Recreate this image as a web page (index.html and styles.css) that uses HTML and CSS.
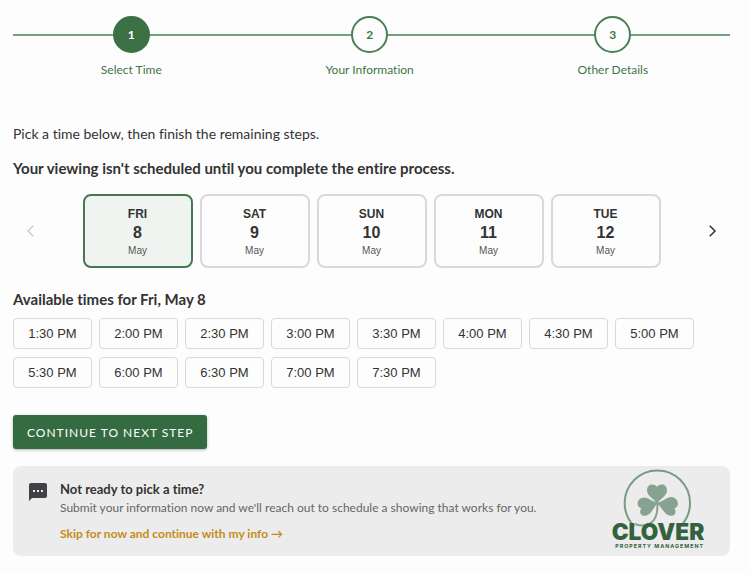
FILE: index.html
```html
<!DOCTYPE html>
<html lang="en">
<head>
  <meta charset="UTF-8" />
  <meta name="viewport" content="width=device-width, initial-scale=1" />
  <title>Schedule a Viewing</title>
  <link rel="stylesheet" href="styles.css">
</head>
<body>
  <main class="scheduler">
    <!-- Steps -->
    <ol class="steps">
      <li class="step active"><span class="step-number">1</span>Select Time</li>
      <li class="step"><span class="step-number">2</span>Your Information</li>
      <li class="step"><span class="step-number">3</span>Other Details</li>
    </ol>

    <p class="intro">Pick a time below, then finish the remaining steps.</p>
    <p class="notice">Your viewing isn't scheduled until you complete the entire process.</p>

    <!-- Day picker -->
    <div class="day-picker">
      <button class="arrow" type="button" aria-label="Previous days" disabled>
        <svg viewBox="0 0 24 24" width="18" height="18"><path d="M15 5l-7 7 7 7" /></svg>
      </button>
      <div class="days">
        <button class="day selected" type="button"><span class="weekday">FRI</span><span class="date">8</span><span class="month">May</span></button>
        <button class="day" type="button"><span class="weekday">SAT</span><span class="date">9</span><span class="month">May</span></button>
        <button class="day" type="button"><span class="weekday">SUN</span><span class="date">10</span><span class="month">May</span></button>
        <button class="day" type="button"><span class="weekday">MON</span><span class="date">11</span><span class="month">May</span></button>
        <button class="day" type="button"><span class="weekday">TUE</span><span class="date">12</span><span class="month">May</span></button>
      </div>
      <button class="arrow" type="button" aria-label="Next days">
        <svg viewBox="0 0 24 24" width="18" height="18"><path d="M9 5l7 7-7 7" /></svg>
      </button>
    </div>

    <!-- Time slots -->
    <h2 class="times-title">Available times for Fri, May 8</h2>
    <div class="times">
      <button class="time" type="button">1:30 PM</button>
      <button class="time" type="button">2:00 PM</button>
      <button class="time" type="button">2:30 PM</button>
      <button class="time" type="button">3:00 PM</button>
      <button class="time" type="button">3:30 PM</button>
      <button class="time" type="button">4:00 PM</button>
      <button class="time" type="button">4:30 PM</button>
      <button class="time" type="button">5:00 PM</button>
      <button class="time" type="button">5:30 PM</button>
      <button class="time" type="button">6:00 PM</button>
      <button class="time" type="button">6:30 PM</button>
      <button class="time" type="button">7:00 PM</button>
      <button class="time" type="button">7:30 PM</button>
    </div>

    <button class="continue-btn" type="button">CONTINUE TO NEXT STEP</button>

    <!-- Skip option -->
    <section class="skip-box">
      <svg class="chat-icon" viewBox="0 0 20 20" width="20" height="20">
        <path d="M3 1h14a2 2 0 0 1 2 2v11a2 2 0 0 1-2 2H4l-3 3V3a2 2 0 0 1 2-2z" fill="#404144" />
        <path d="M5 8h2v2H5zM9 8h2v2H9zM13 8h2v2h-2z" fill="#ececec" />
      </svg>
      <div class="skip-text">
        <h3 class="skip-title">Not ready to pick a time?</h3>
        <p class="skip-info">Submit your information now and we'll reach out to schedule a showing that works for you.</p>
        <a class="skip-link" href="#">Skip for now and continue with my info →</a>
      </div>
      <svg class="logo" viewBox="30 24 288 246" width="96" height="82" role="img" aria-label="Clover Property Management">
        <path d="M103 199A98 98 0 1 1 241 199" fill="none" stroke="#789b84" stroke-width="6" />
        <path d="M172 130C174 164 166 180 152 189C136 200 120 198 105 192" fill="none" stroke="#87a290" stroke-width="6" />
        <g fill="#87a290">
          <path d="M171 134C164 115 141 110 141 91C141 72 161 69 171 80C181 69 201 72 201 91C201 110 178 115 171 134z" />
          <path d="M174 128C160 142 155 164 136 167C121 170 116 155 124 145C109 141 109 121 123 115C141 106 153 125 174 128z" />
          <path d="M170 128C186 142 192 164 211 167C226 170 231 155 223 145C238 141 237 119 222 113C205 105 193 125 170 128z" />
        </g>
        <text class="logo-name" x="174" y="240" text-anchor="middle">CLOVER</text>
        <text class="logo-sub" x="179" y="265" text-anchor="middle">PROPERTY MANAGEMENT</text>
      </svg>
    </section>
  </main>
</body>
</html>
```
FILE: styles.css
```css
* {
  box-sizing: border-box;
}
body {
  margin: 0;
  background: #fdfdfd;
  color: #333;
  font-family: Lato, "Liberation Sans", sans-serif;
  font-variant-ligatures: none;
}
button {
  font-family: "Liberation Sans", Arial, sans-serif;
  color: #333;
  cursor: pointer;
}
h2, h3, p {
  margin: 0;
}
.scheduler {
  padding: 16px 20px 16px 13px;
}

/* Steps */
.steps {
  display: flex;
  justify-content: space-around;
  margin: 0 0 46px;
  padding: 0 0 0 6px;
  list-style: none;
  background: linear-gradient(#73a07d, #73a07d) 0 18px / 100% 2px no-repeat;
}
.step {
  display: flex;
  flex-direction: column;
  align-items: center;
  gap: 8px;
  font-size: 12px;
  line-height: 18px;
  color: #3f7549;
}
.step-number {
  display: flex;
  align-items: center;
  justify-content: center;
  width: 37px;
  height: 37px;
  border: 2px solid #4b7f57;
  border-radius: 50%;
  background: #fdfdfd;
  font-weight: bold;
}
.step.active .step-number {
  background: #3b7144;
  border-color: #3b7144;
  color: #fff;
}

.intro {
  font-size: 14px;
  line-height: 18px;
}
.notice, .times-title {
  font-size: 15px;
  font-weight: bold;
  line-height: 18px;
}
.notice {
  margin: 16px 0 17px;
}

/* Day picker */
.day-picker {
  display: flex;
  align-items: center;
  justify-content: space-between;
  margin-bottom: 22px;
}
.arrow {
  display: flex;
  justify-content: center;
  width: 36px;
  padding: 8px 0;
  border: none;
  background: none;
}
.arrow svg {
  fill: none;
  stroke: #333;
  stroke-width: 2;
}
.arrow:disabled svg {
  stroke: #ccc;
}
.days {
  display: flex;
  gap: 7px;
}
.day {
  display: flex;
  flex-direction: column;
  align-items: center;
  width: 110px;
  padding: 10px 0 8px;
  border: 2px solid #d9d9d9;
  border-radius: 8px;
  background: #fdfdfd;
}
.day.selected {
  border-color: #46794f;
  background: #f0f4f1;
}
.weekday {
  font-size: 12px;
  font-weight: bold;
  line-height: 16px;
}
.date {
  font-size: 16px;
  font-weight: bold;
  line-height: 22px;
}
.month {
  font-size: 10px;
  line-height: 14px;
  color: #555;
}

/* Time slots */
.times {
  display: flex;
  flex-wrap: wrap;
  gap: 8px 7px;
  margin: 10px 0 27px;
}
.time {
  width: 79px;
  height: 31px;
  padding: 0;
  border: 1px solid #d9d9d9;
  border-radius: 4px;
  background: #fdfdfd;
  font-size: 13px;
}

.continue-btn {
  display: block;
  height: 34px;
  padding: 0 14px;
  border: none;
  border-radius: 3px;
  background: #346b40;
  box-shadow: 0 1px 3px rgba(0,0,0,0.3);
  color: #fff;
  font-family: Lato, sans-serif;
  font-size: 12px;
  letter-spacing: 1px;
}

/* Skip option */
.skip-box {
  display: flex;
  margin-top: 17px;
  padding: 0 24px 0 15px;
  border-radius: 8px;
  background: #ececec;
}
.chat-icon {
  flex: none;
  margin-top: 16px;
}
.skip-text {
  flex: 1;
  padding: 14px 0 12px 12px;
  font-size: 12px;
}
.skip-title {
  font-size: 13px;
  line-height: 18px;
}
.skip-info {
  margin-bottom: 6px;
  line-height: 20px;
  color: #666;
}
.skip-link {
  display: block;
  line-height: 20px;
  font-weight: bold;
  color: #c58b19;
  text-decoration: none;
}
.logo {
  flex: none;
  margin-top: 2px;
}
.logo-name {
  fill: #34623f;
  font-family: Inter, sans-serif;
  font-size: 68px;
  font-weight: 900;
}
.logo-sub {
  fill: #34623f;
  font-family: Inter, sans-serif;
  font-size: 16px;
  font-weight: 700;
  letter-spacing: 3px;
}
```
